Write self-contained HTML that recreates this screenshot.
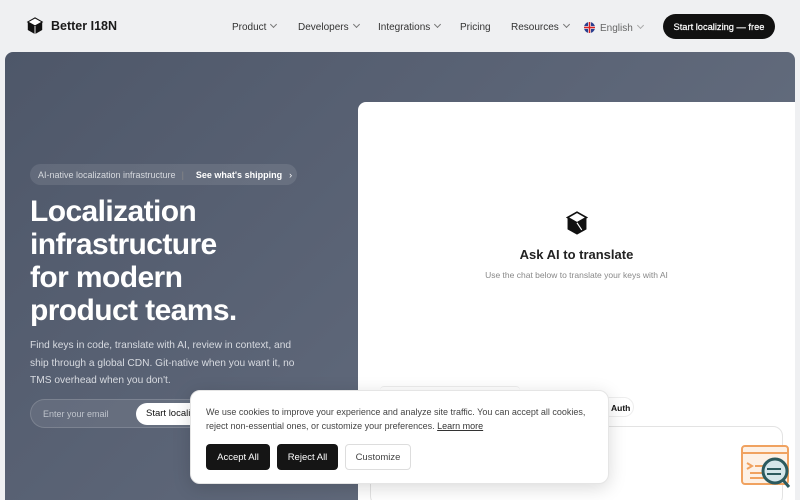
<!DOCTYPE html>
<html><head><meta charset="utf-8"><style>
*{box-sizing:border-box;margin:0;padding:0}
html,body{width:800px;height:500px;overflow:hidden}
body{background:#eff0f2;font-family:"Liberation Sans",sans-serif;position:relative;color:#111}
.nav{position:absolute;top:0;left:0;right:0;height:52px}
.logo{position:absolute;left:26px;top:17px;display:flex;align-items:center;gap:7px;font-weight:bold;font-size:12.5px;color:#1a1a1a}
.links{position:absolute;top:22px;font-size:10px;color:#333;display:flex}
.links span{position:absolute;white-space:nowrap}
.chev{display:inline-block;width:5px;height:5px;border-right:1px solid #777;border-bottom:1px solid #777;transform:rotate(45deg);margin-left:5px;position:relative;top:-3px}
.cta{position:absolute;left:663px;top:14px;width:112px;height:25px;border-radius:13px;background:#111;color:#fff;font-size:9.3px;display:flex;align-items:center;justify-content:center;-webkit-text-stroke:.2px #fff}
.hero{position:absolute;left:5px;top:52px;width:790px;height:448px;border-radius:8px 8px 0 0;background:linear-gradient(135deg,#4e5769 0%,#5c6577 50%,#6a7383 100%)}
.pill{position:absolute;left:30px;top:164px;width:267px;height:21px;border-radius:11px;background:rgba(255,255,255,.1);font-size:9px;color:#d6d9de;display:flex;align-items:center;padding-left:8px}
.pill b{color:#fff;margin-left:12px}
h1{position:absolute;left:30px;top:195px;font-size:30px;line-height:33px;color:#fff;font-weight:bold;letter-spacing:-.6px}
.sub{position:absolute;left:30px;top:337px;width:275px;font-size:10.2px;line-height:17.5px;color:#d8dbe1}
.email{position:absolute;left:30px;top:399px;width:200px;height:29px;border-radius:15px;background:rgba(255,255,255,.08);border:1px solid rgba(255,255,255,.15);font-size:9px;color:#bfc4cc;padding:9px 12px}
.start{position:absolute;left:136px;top:403px;width:80px;height:22px;border-radius:11px;background:#fff;font-size:9.5px;color:#111;padding:5px 10px}
.card{position:absolute;left:358px;top:102px;width:437px;height:398px;background:#fff;border-radius:8px 0 0 0}
.ask{position:absolute;left:358px;width:437px;text-align:center}
.cookie{position:absolute;left:190px;top:390px;width:419px;height:94px;background:#fff;border-radius:10px;box-shadow:0 4px 18px rgba(0,0,0,.15);border:1px solid #e5e5e5}
.cookie p{position:absolute;left:15px;top:14px;width:395px;font-size:9px;line-height:14px;color:#444}
.btn{position:absolute;top:53px;height:26px;border-radius:4px;font-size:9.5px;display:flex;align-items:center;justify-content:center}
</style></head><body>
<div class="nav">
<div class="logo"><svg width="18" height="18" viewBox="0 0 20 20"><path d="M10 1L18 5.5V14.5L10 19L2 14.5V5.5Z" fill="#111"/><path d="M10 1L18 5.5L10 10L2 5.5Z" fill="#fff" stroke="#111" stroke-width="1.2"/><path d="M10 10V19" stroke="#fff" stroke-width="1"/></svg>Better I18N</div>
<div class="links">
<span style="left:232px">Product<i class="chev"></i></span>
<span style="left:298px">Developers<i class="chev"></i></span>
<span style="left:378px">Integrations<i class="chev"></i></span>
<span style="left:460px">Pricing</span>
<span style="left:511px">Resources<i class="chev"></i></span>
<span style="left:584px"><svg width="11" height="11" viewBox="0 0 12 12" style="vertical-align:-2px;margin-right:5px"><circle cx="6" cy="6" r="6" fill="#2a3f8f"/><path d="M0 6H12M6 0V12" stroke="#fff" stroke-width="3"/><path d="M0 6H12M6 0V12" stroke="#d22" stroke-width="1.6"/></svg><span style="position:static;color:#666">English</span><i class="chev" style="border-color:#aaa"></i></span>
</div>
<div class="cta">Start localizing — free</div>
</div>
<div class="hero"></div>
<div class="pill">AI-native localization infrastructure<span style="color:#888;margin-left:6px">|</span><b>See what's shipping</b><span style="margin-left:7px;color:#fff">›</span></div>
<h1>Localization<br>infrastructure<br>for modern<br>product teams.</h1>
<div class="sub">Find keys in code, translate with AI, review in context, and ship through a global CDN. Git-native when you want it, no TMS overhead when you don't.</div>
<div class="email">Enter your email</div>
<div class="start">Start locali</div>
<div class="card"></div>
<svg style="position:absolute;left:565px;top:211px" width="24" height="26" viewBox="0 0 20 22"><path d="M10 1L18 5.5V15.5L10 20L2 15.5V5.5Z" fill="#111"/><path d="M10 1L18 5.5L10 10L2 5.5Z" fill="#fff" stroke="#111" stroke-width="1.4"/><path d="M10 10L14 16" stroke="#fff" stroke-width="1"/></svg>
<div class="ask" style="top:247px;font-size:13px;font-weight:bold;color:#222">Ask AI to translate</div>
<div class="ask" style="top:270px;font-size:8.5px;color:#888">Use the chat below to translate your keys with AI</div>
<div style="position:absolute;left:380px;top:386px;width:140px;height:8px;border-top:1px solid #eee;border-radius:6px"></div>
<div style="position:absolute;left:600px;top:397px;width:34px;height:20px;border:1px solid #eee;border-radius:10px;font-size:8.5px;font-weight:bold;padding:5px 0 0 10px">Auth</div>
<div style="position:absolute;left:370px;top:426px;width:413px;height:80px;border:1px solid #e3e3e3;border-radius:10px"></div>
<div class="cookie"><p>We use cookies to improve your experience and analyze site traffic. You can accept all cookies, reject non-essential ones, or customize your preferences. <u style="color:#333">Learn more</u></p>
<div class="btn" style="left:15px;width:64px;background:#151515;color:#fff">Accept All</div>
<div class="btn" style="left:86px;width:61px;background:#151515;color:#fff">Reject All</div>
<div class="btn" style="left:154px;width:66px;border:1px solid #ddd;color:#444">Customize</div>
</div>
<svg style="position:absolute;left:740px;top:444px" width="52" height="48" viewBox="0 0 52 48"><rect x="2" y="2" width="46" height="38" rx="3" fill="#fdf1e6" stroke="#f0a260" stroke-width="2"/><line x1="2" y1="9" x2="48" y2="9" stroke="#f0a260" stroke-width="2"/><path d="M7 19l5 3-5 3M15 22h14M10 29h20M10 34h16" stroke="#f0a260" stroke-width="2" fill="none"/><circle cx="35" cy="27" r="12" fill="#d5e6ea" stroke="#2c5a5e" stroke-width="3"/><path d="M27 25h14M27 30h14" stroke="#2c5a5e" stroke-width="2"/><path d="M43 36l6 7" stroke="#2c5a5e" stroke-width="3"/></svg>
</body></html>
